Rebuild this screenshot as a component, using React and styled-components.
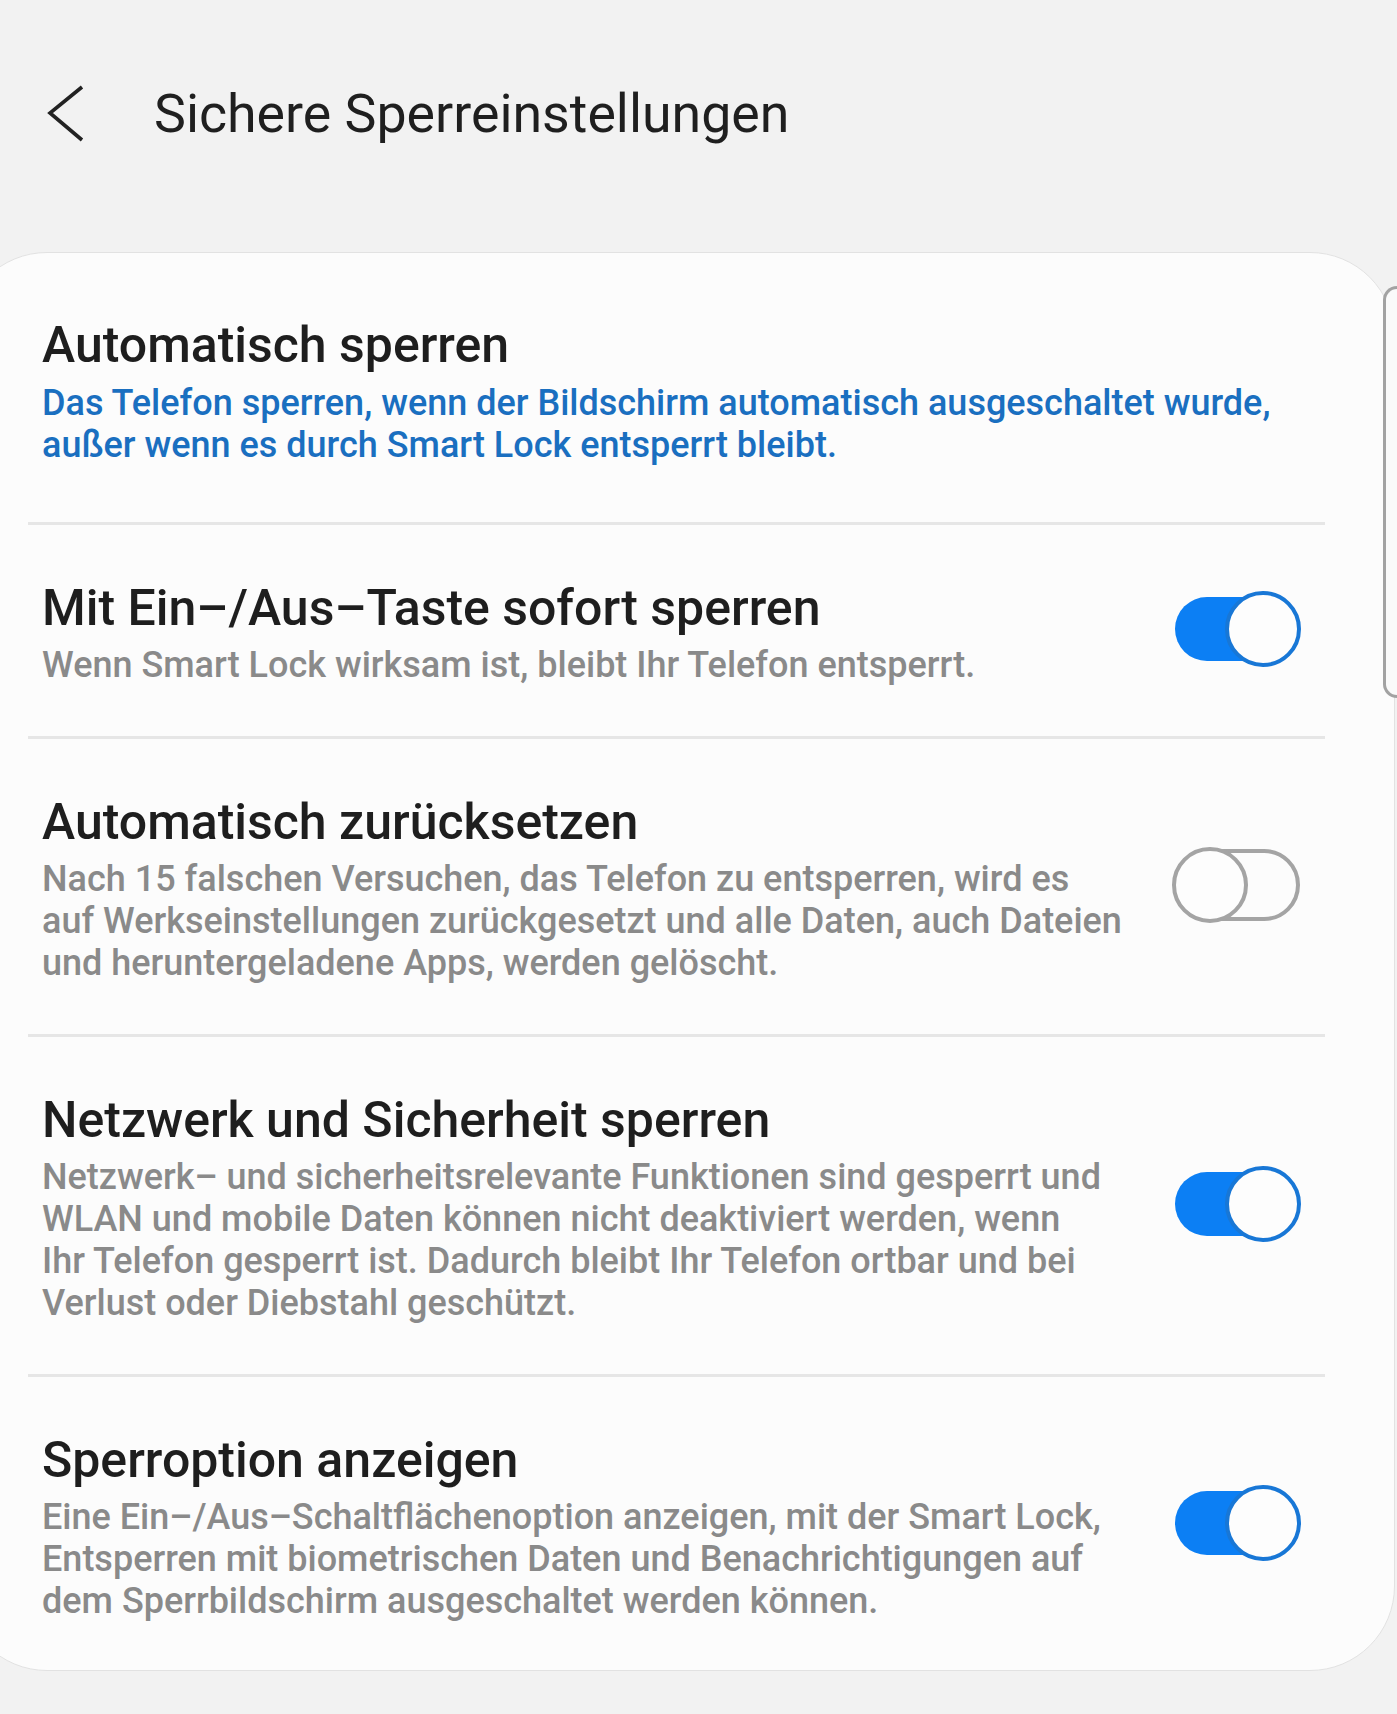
import styled, { createGlobalStyle } from "styled-components";

const GlobalStyle = createGlobalStyle`
  html, body {
    margin: 0;
    padding: 0;
    background: #f2f2f2;
    overflow-x: hidden;
  }
  body {
    font-family: Roboto, "Noto Sans", "Liberation Sans", sans-serif;
    color: #222;
  }
`;

const settings = [
  {
    title: "Mit Ein–/Aus–Taste sofort sperren",
    lines: ["Wenn Smart Lock wirksam ist, bleibt Ihr Telefon entsperrt."],
    on: true,
  },
  {
    title: "Automatisch zurücksetzen",
    lines: [
      "Nach 15 falschen Versuchen, das Telefon zu entsperren, wird es",
      "auf Werkseinstellungen zurückgesetzt und alle Daten, auch Dateien",
      "und heruntergeladene Apps, werden gelöscht.",
    ],
    on: false,
  },
  {
    title: "Netzwerk und Sicherheit sperren",
    lines: [
      "Netzwerk– und sicherheitsrelevante Funktionen sind gesperrt und",
      "WLAN und mobile Daten können nicht deaktiviert werden, wenn",
      "Ihr Telefon gesperrt ist. Dadurch bleibt Ihr Telefon ortbar und bei",
      "Verlust oder Diebstahl geschützt.",
    ],
    on: true,
  },
  {
    title: "Sperroption anzeigen",
    lines: [
      "Eine Ein–/Aus–Schaltflächenoption anzeigen, mit der Smart Lock,",
      "Entsperren mit biometrischen Daten und Benachrichtigungen auf",
      "dem Sperrbildschirm ausgeschaltet werden können.",
    ],
    on: true,
    last: true,
  },
];

export default function App() {
  return (
    <>
      <GlobalStyle />
      <Page>
        <Header>
          <BackButton aria-label="Zurück">
            <svg width="44" height="60" viewBox="0 0 44 60" fill="none">
              <polyline
                points="38,4 6,30 38,57"
                stroke="#222"
                strokeWidth="3.6"
                strokeLinecap="butt"
                strokeLinejoin="miter"
              />
            </svg>
          </BackButton>
          <PageTitle>Sichere Sperreinstellungen</PageTitle>
        </Header>

        <Card>
          <Row $first>
            <TextBlock $first>
              <RowTitle>Automatisch sperren</RowTitle>
              <RowSummary $accent>
                Das Telefon sperren, wenn der Bildschirm automatisch ausgeschaltet wurde,
                <br />
                außer wenn es durch Smart Lock entsperrt bleibt.
              </RowSummary>
            </TextBlock>
          </Row>

          {settings.map((item) => (
            <div key={item.title}>
              <Divider />
              <Row $last={item.last}>
                <TextBlock>
                  <RowTitle>{item.title}</RowTitle>
                  <RowSummary>
                    {item.lines.map((line, i) => (
                      <span key={i}>
                        {line}
                        {i < item.lines.length - 1 && <br />}
                      </span>
                    ))}
                  </RowSummary>
                </TextBlock>
                <Switch $on={item.on}>
                  <Track $on={item.on} />
                  <Thumb $on={item.on} />
                </Switch>
              </Row>
            </div>
          ))}
        </Card>

        <ScrollIndicator />
      </Page>
    </>
  );
}

const Page = styled.div`
  position: relative;
  min-height: 1714px;
  width: 1397px;
  overflow: hidden;
`;

const Header = styled.header`
  display: flex;
  align-items: center;
  gap: 66px;
  padding: 82px 0 0 44px;
  height: 64px;
  margin-bottom: 106px;
`;

const BackButton = styled.div`
  display: flex;
  width: 44px;
  height: 60px;
  margin-top: -2px;
`;

const PageTitle = styled.h1`
  margin: 0;
  font-size: 53.7px;
  line-height: 64px;
  font-weight: 400;
  color: #1f1f1f;
  white-space: nowrap;
`;

const Card = styled.section`
  margin-left: -38px;
  width: 1431px;
  background: #fcfcfc;
  border: 1px solid #e2e2e2;
  border-radius: 85px;
  overflow: hidden;
`;

const Row = styled.div`
  display: flex;
  align-items: center;
  padding: ${(p) => (p.$first ? "62px" : "53px")} 92px
    ${(p) => (p.$first ? "56px" : p.$last ? "48px" : "50px")} 79px;
`;

const TextBlock = styled.div`
  flex: 1;
  display: flex;
  flex-direction: column;
  gap: ${(p) => (p.$first ? "7px" : "6px")};
`;

const RowTitle = styled.div`
  font-size: 50px;
  line-height: 60px;
  font-weight: 500;
  color: #1e1e1e;
  white-space: nowrap;
`;

const RowSummary = styled.div`
  font-size: 36px;
  line-height: 42px;
  font-weight: 500;
  color: ${(p) => (p.$accent ? "#1a6fc0" : "#8a8a8a")};
  white-space: nowrap;
`;

const Divider = styled.hr`
  margin: 0 69px 0 65px;
  border: none;
  height: 3px;
  background: #e6e6e6;
`;

const Switch = styled.div`
  position: relative;
  flex: none;
  width: 130px;
  height: 76px;
  margin-bottom: 7px;
`;

const Track = styled.div`
  position: absolute;
  box-sizing: border-box;
  border-radius: 40px;
  ${(p) =>
    p.$on
      ? `
    left: 3px;
    top: 6px;
    width: 100px;
    height: 64px;
    background: #0c7ff4;
  `
      : `
    left: 12px;
    right: 2px;
    top: 2px;
    height: 72px;
    border: 4px solid #a4a4a4;
  `}
`;

const Thumb = styled.div`
  position: absolute;
  top: 0;
  box-sizing: border-box;
  width: 76px;
  height: 76px;
  border-radius: 50%;
  background: #fdfdfd;
  ${(p) =>
    p.$on
      ? `
    right: 1px;
    border: 4px solid #1877d6;
  `
      : `
    left: 0;
    border: 4px solid #a4a4a4;
  `}
`;

// thin scroll handle peeking in at the right edge
const ScrollIndicator = styled.div`
  position: absolute;
  left: 1383px;
  top: 286px;
  width: 30px;
  height: 412px;
  box-sizing: border-box;
  border: 3px solid #a2a2a2;
  border-right: none;
  border-radius: 14px 0 0 14px;
  background: #fafafa;
`;
